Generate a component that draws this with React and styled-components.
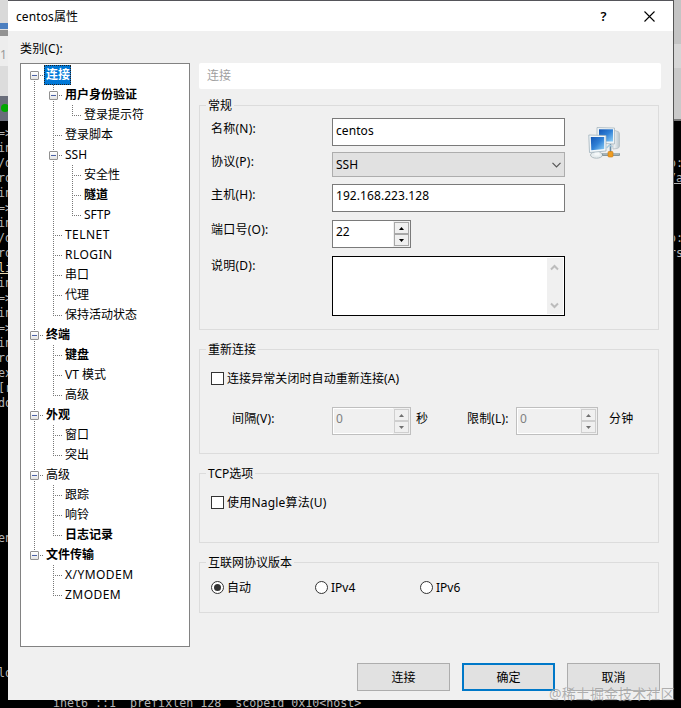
import { Fragment } from 'react';
import styled, { createGlobalStyle, css } from 'styled-components';

const GlobalStyle = createGlobalStyle`
    * {
        box-sizing: border-box;
    }

    body {
        margin: 0;
        background: #000;
        overflow: hidden;
        font-family: 'Noto Sans', 'Noto Sans CJK SC', sans-serif;
        font-size: 12px;
        color: #000;
    }

    button, input, select {
        font: inherit;
        color: inherit;
    }
`

const Desktop = styled.div`
    position: relative;
    display: grid;
    grid-template-columns: 8px 665px 8px;
    grid-template-rows: 700px 8px;
    width: 681px;
    height: 708px;
    background: #000;
    overflow: hidden;
`

const Strip = styled.div`
    display: flex;
    flex-direction: column;
    overflow: hidden;
    border-left: ${props => props.$right ? '1px solid #555' : '0'};
`

const Block = styled.div`
    flex: none;
    height: ${props => props.$h}px;
    background: ${props => props.$bg};
    color: #9a9a9a;
    font-size: 12px;
    line-height: ${props => props.$h + 8}px;
    white-space: nowrap;
    overflow: hidden;
`

const StatusDot = styled.div`
    width: 8px;
    height: 8px;
    margin: 8px 0 0 1px;
    border-radius: 50%;
    background: #00a800;
`

const TermLine = styled.div`
    flex: none;
    height: 15px;
    font-family: 'DejaVu Sans Mono', monospace;
    font-size: 11.65px;
    line-height: 15px;
    white-space: pre;
    color: ${props => props.$color || '#b4b4b4'};
    text-decoration: ${props => props.$underline ? 'underline' : 'none'};
    margin-left: ${props => props.$shift || 0}px;
`

const BottomStrip = styled.div`
    grid-column: 1 / 4;
    height: 8px;
    padding-left: 53px;
    overflow: hidden;

    & > div {
        margin-top: -4px;
    }
`

const Dialog = styled.div`
    display: flex;
    flex-direction: column;
    height: 700px;
    background: #f0f0f0;
    border-top: 1px solid #55555a;
`

const TitleBar = styled.div`
    display: flex;
    align-items: center;
    height: 30px;
    padding-left: 8px;
    background: #fff;
`

const Title = styled.div`
    flex: 1;
    letter-spacing: .1px;
`

const TitleButton = styled.div`
    display: flex;
    align-items: center;
    justify-content: center;
    width: 46px;
    height: 30px;
    padding-right: 1px;
    font-size: 13px;
    font-weight: 600;
`

const Body = styled.div`
    display: flex;
    height: 616px;
    padding-left: 12px;
`

const Side = styled.div`
    width: 170px;
    padding-top: 9px;
`

const Caption = styled.div`
    height: 23px;
    line-height: 17px;
    letter-spacing: .15px;
`

const Tree = styled.div`
    height: 584px;
    padding: 1px 0 0 4px;
    background: #fff;
    border: 1px solid #828282;
`

const TreeRow = styled.div`
    display: flex;
    height: 20px;
`

const dotsY = 'repeating-linear-gradient(to bottom, #777 0 1px, transparent 1px 2px)'
const dotsX = 'repeating-linear-gradient(to right, #777 0 1px, transparent 1px 2px)'

const Guide = styled.div`
    display: flex;
    align-items: center;
    justify-content: center;
    width: 19px;
    height: 20px;
    padding-top: 1px;
    background-repeat: no-repeat;
    background-image: ${dotsY}, ${dotsY}, ${dotsX};
    background-size: 1px ${props => props.$up ? 10 : 0}px, 1px ${props => props.$down ? 10 : 0}px, ${props => props.$branch ? 9 : 0}px 1px;
    background-position: 9px 0, 9px 10px, 9px 10px;
`

const Expander = styled.div`
    display: flex;
    align-items: center;
    justify-content: center;
    width: 9px;
    height: 9px;
    background: linear-gradient(#fff, #e4e4e4);
    border: 1px solid #919191;
    border-radius: 1px;

    &::after {
        content: "";
        width: 5px;
        height: 1px;
        background: #4b63a7;
    }
`

const TreeLabel = styled.div`
    padding: 0 1px 0 2px;
    line-height: 20px;
    height: 20px;
    white-space: nowrap;
    font-weight: ${props => props.$bold ? 700 : 400};
    letter-spacing: ${props => props.$wide ? '.45px' : '0'};

    ${props => props.$selected && css`
        color: #fff;
        background: #0078d7;
        outline: 1px dotted #222;
        outline-offset: -1px;
    `}
`

const Panel = styled.div`
    width: 462px;
    margin: 32px 0 0 9px;
`

const PanelTitle = styled.div`
    height: 26px;
    padding-left: 8px;
    margin-bottom: 9px;
    line-height: 26px;
    color: #a0a0a0;
    background: #fff;
    border-radius: 2px;
`

const Group = styled.fieldset`
    width: 460px;
    height: ${props => props.$h}px;
    margin: 0 0 12px;
    padding: ${props => props.$top}px 0 0 11px;
    border: 1px solid #dcdcdc;
`

const Legend = styled.legend`
    height: 15px;
    margin-left: -5px;
    padding: 0 2px;
    line-height: 16px;
`

const Columns = styled.div`
    display: flex;
`

const Field = styled.div`
    display: flex;
    align-items: flex-start;
    margin-bottom: ${props => props.$gap}px;
`

const FieldLabel = styled.label`
    width: 121px;
    line-height: 18px;
    padding-top: ${props => props.$pad || 1}px;
    letter-spacing: .25px;
`

const TextBox = styled.div`
    width: 233px;
    height: 28px;
    padding-left: 3px;
    line-height: ${props => props.$line || 23}px;
    letter-spacing: .07px;
    background: #fff;
    border: 1px solid #7a7a7a;
`

const Combo = styled.div`
    display: flex;
    align-items: center;
    justify-content: space-between;
    width: 233px;
    height: 25px;
    padding: 0 3px;
    background: #e1e1e1;
    border: 1px solid #adadad;
`

const SpinBox = styled.div`
    display: flex;
    justify-content: space-between;
    width: ${props => props.$w}px;
    height: 28px;
    padding-left: 3px;
    line-height: 22px;
    color: ${props => props.$disabled ? '#808080' : '#000'};
    background: ${props => props.$disabled ? '#f0f0f0' : '#fff'};
    border: 1px solid ${props => props.$disabled ? '#bfbfbf' : '#7a7a7a'};
    box-shadow: ${props => props.$disabled ? 'inset 0 0 0 1px #fff' : 'none'};
`

const SpinButtons = styled.div`
    display: flex;
    flex-direction: column;
    width: 17px;
    padding: 1px;
    background: #f0f0f0;
`

const SpinButton = styled.div`
    display: flex;
    flex: 1;
    align-items: center;
    justify-content: center;
    border: 1px solid ${props => props.$disabled ? '#cfcfcf' : '#a8a8a8'};
`

const Memo = styled.div`
    display: flex;
    justify-content: flex-end;
    width: 233px;
    height: 60px;
    padding: 1px;
    background: #fff;
    border: 1px solid #000;
`

const ScrollTrack = styled.div`
    display: flex;
    flex-direction: column;
    align-items: center;
    justify-content: space-between;
    width: 16px;
    padding: 6px 1px 5px 0;
    background: #f0f0f0;
`

const SessionIcon = styled.svg`
    margin: 8px 0 0 23px;
`

const Check = styled.div`
    display: flex;
    align-items: center;
    gap: 3px;
    height: 18px;
    width: ${props => props.$w ? props.$w + 'px' : 'auto'};
    letter-spacing: ${props => props.$spacing || 0}px;
    white-space: nowrap;
`

const CheckMark = styled.span`
    width: 13px;
    height: 13px;
    background: #fff;
    border: 1px solid #333;
`

const RadioMark = styled.span`
    display: flex;
    align-items: center;
    justify-content: center;
    width: 13px;
    height: 13px;
    background: #fff;
    border: 1px solid #333;
    border-radius: 50%;

    &::after {
        content: "";
        width: 7px;
        height: 7px;
        border-radius: 50%;
        background: ${props => props.$on ? '#333' : 'transparent'};
    }
`

const IntervalRow = styled.div`
    display: flex;
    margin: 20px 0 0 21px;
`

const IntervalText = styled.span`
    width: ${props => props.$w}px;
    padding-left: ${props => props.$pad || 0}px;
    line-height: 23px;
    letter-spacing: .15px;
    white-space: nowrap;
`

const Footer = styled.div`
    display: flex;
    justify-content: flex-end;
    gap: 12px;
    padding: 16px 13px 0 0;
`

const Button = styled.button`
    width: 93px;
    height: 28px;
    padding: 0 0 1px;
    background: #e1e1e1;
    border: ${props => props.$primary ? '2px solid #0078c8' : '1px solid #adadad'};
`

const Watermark = styled.div`
    position: absolute;
    left: 549px;
    top: 684px;
    font-size: 14px;
    line-height: 20px;
    letter-spacing: .1px;
    white-space: nowrap;
    color: rgba(150, 150, 150, .75);
    text-shadow: 0 0 1px rgba(255, 255, 255, .5);
`

const categories = [
    {
        name: '连接', bold: true, selected: true, items: [
            { name: '用户身份验证', bold: true, items: [{ name: '登录提示符' }] },
            { name: '登录脚本' },
            { name: 'SSH', items: [{ name: '安全性' }, { name: '隧道', bold: true }, { name: 'SFTP' }] },
            { name: 'TELNET' },
            { name: 'RLOGIN' },
            { name: '串口' },
            { name: '代理' },
            { name: '保持活动状态' },
        ]
    },
    { name: '终端', bold: true, items: [{ name: '键盘', bold: true }, { name: 'VT 模式' }, { name: '高级' }] },
    { name: '外观', bold: true, items: [{ name: '窗口' }, { name: '突出' }] },
    { name: '高级', items: [{ name: '跟踪' }, { name: '响铃' }, { name: '日志记录', bold: true }] },
    { name: '文件传输', bold: true, items: [{ name: 'X/YMODEM' }, { name: 'ZMODEM' }] },
]

const leftTerminal = [
    '=>', 'in', '/d', 'ro', 'in', '=>', 'in', '/d', 'ro', 'li', 'in', '=>', 'in', '=>', 'in', 'ro', 'ex', '[r', 'do',
    '', '', '', '', '', '', '', '', 'en', '', '', '', '', '', '', '', '', 'lo',
]

const rightTerminal = ['', '', 'o:', '/a', '', '', '', 'o:', 'rs']

function Nodes({ items, parents = [] }) {
    return items.map((item, i) => {
        const last = i === items.length - 1
        const first = i === 0 && parents.length === 0
        return (
            <Fragment key={item.name}>
                <TreeRow>
                    {parents.map((on, n) => <Guide key={n} $up={on} $down={on} />)}
                    <Guide $up={!first} $down={!last} $branch>
                        {item.items && <Expander />}
                    </Guide>
                    <TreeLabel $bold={item.bold} $selected={item.selected} $wide={/^[A-Z/]{6,}$/.test(item.name)}>
                        {item.name}
                    </TreeLabel>
                </TreeRow>
                {item.items && <Nodes items={item.items} parents={[...parents, !last]} />}
            </Fragment>
        )
    })
}

function Spinner({ value, width, disabled }) {
    const fill = disabled ? '#707070' : '#000'
    return (
        <SpinBox $w={width} $disabled={disabled}>
            {value}
            <SpinButtons>
                <SpinButton $disabled={disabled}>
                    <svg width="5" height="3"><path d="M0 3L2.5 0L5 3Z" fill={fill} /></svg>
                </SpinButton>
                <SpinButton $disabled={disabled}>
                    <svg width="5" height="3"><path d="M0 0L2.5 3L5 0Z" fill={fill} /></svg>
                </SpinButton>
            </SpinButtons>
        </SpinBox>
    )
}

function Computers() {
    return (
        <SessionIcon width="34" height="34" viewBox="0 0 34 34">
            <defs>
                <linearGradient id="screen" x1="0" y1="0" x2="1" y2="1">
                    <stop offset="0" stopColor="#1456b4" />
                    <stop offset=".5" stopColor="#2f80d6" />
                    <stop offset="1" stopColor="#8fd0f6" />
                </linearGradient>
                <linearGradient id="tower" x1="0" y1="0" x2="1" y2="0">
                    <stop offset="0" stopColor="#f8fafb" />
                    <stop offset="1" stopColor="#b9c5cb" />
                </linearGradient>
            </defs>
            <path d="M25 4L30 5.500Q31.500 6 31.500 8V20Q31.500 22 29 22.500L25 23Z" fill="url(#tower)" stroke="#b5bfc4" strokeWidth=".8" />
            <path d="M9 1.500L26.500 2V18L9 17Z" fill="#eef4f7" stroke="#a9b7bf" strokeWidth=".8" />
            <path d="M11 3.300H25V15.500H11Z" fill="url(#screen)" />
            <ellipse cx="8.500" cy="29" rx="6" ry="3.200" fill="#e7edef" stroke="#a9b5bb" strokeWidth=".9" />
            <path d="M6.500 25H11.500V29.500H6.500Z" fill="#f5f8f9" />
            <path d="M.8 9L18 9.500V25L1.500 26.500Z" fill="#f4f8fa" stroke="#9fb1bb" strokeWidth=".8" />
            <path d="M2.800 11H16.200V23L3.300 24.300Z" fill="url(#screen)" />
            <path d="M22.500 18V28" stroke="#6d8ea5" strokeWidth="1.600" />
            <path d="M18.500 22L21.500 19L24.500 21" fill="none" stroke="#a8cce0" strokeWidth="1.500" />
            <rect x="14" y="27" width="18" height="3" rx="1" fill="#87989e" />
            <path d="M15 28H31" stroke="#d5dddf" strokeWidth=".8" />
            <rect x="20" y="25.500" width="5" height="5.500" rx="1" fill="#ef9d22" stroke="#cb7b13" strokeWidth=".6" />
        </SessionIcon>
    )
}

export default function App() {
    return (
        <>
            <GlobalStyle />
            <Desktop>
                <Strip>
                    <Block $h={23} $bg="#d9d9d9" />
                    <Block $h={6} $bg="#4c7fc0" />
                    <Block $h={1} $bg="#e0e0e0" />
                    <Block $h={6} $bg="#929292" />
                    <Block $h={30} $bg="#ededed">1</Block>
                    <Block $h={30} $bg="#dcdcdc" />
                    <Block $h={25} $bg="#696d7a"><StatusDot /></Block>
                    <Block $h={5} $bg="#000" />
                    {leftTerminal.map((text, i) => (
                        <TermLine key={i} $shift={-2} $underline={text === 'li'} $color={text === 'li' ? '#e8d8b0' : undefined}>{text}</TermLine>
                    ))}
                </Strip>
                <Dialog>
                    <TitleBar>
                        <Title>centos属性</Title>
                        <TitleButton>?</TitleButton>
                        <TitleButton>
                            <svg width="11" height="11"><path d="M.5.5L10.500 10.500M10.500.5L.5 10.500" stroke="#000" strokeWidth="1.100" /></svg>
                        </TitleButton>
                    </TitleBar>
                    <Body>
                        <Side>
                            <Caption>类别(C):</Caption>
                            <Tree><Nodes items={categories} /></Tree>
                        </Side>
                        <Panel>
                            <PanelTitle>连接</PanelTitle>
                            <Group $h={232} $top={5}>
                                <Legend>常规</Legend>
                                <Columns>
                                    <div>
                                        <Field $gap={6}>
                                            <FieldLabel $pad={2}>名称(N):</FieldLabel>
                                            <TextBox>centos</TextBox>
                                        </Field>
                                        <Field $gap={7}>
                                            <FieldLabel>协议(P):</FieldLabel>
                                            <Combo>
                                                SSH
                                                <svg width="9" height="6"><path d="M.5.8L4.500 4.800L8.500.8" fill="none" stroke="#555" strokeWidth="1.200" /></svg>
                                            </Combo>
                                        </Field>
                                        <Field $gap={8}>
                                            <FieldLabel $pad={2}>主机(H):</FieldLabel>
                                            <TextBox $line={22}>192.168.223.128</TextBox>
                                        </Field>
                                        <Field $gap={8}>
                                            <FieldLabel>端口号(O):</FieldLabel>
                                            <Spinner value="22" width={79} />
                                        </Field>
                                        <Field $gap={0}>
                                            <FieldLabel>说明(D):</FieldLabel>
                                            <Memo>
                                                <ScrollTrack>
                                                    <svg width="9" height="7"><path d="M1 5.500L4.500 2L8 5.500" fill="none" stroke="#bcbcbc" strokeWidth="2" /></svg>
                                                    <svg width="9" height="7"><path d="M1 1.500L4.500 5L8 1.500" fill="none" stroke="#bcbcbc" strokeWidth="2" /></svg>
                                                </ScrollTrack>
                                            </Memo>
                                        </Field>
                                    </div>
                                    <Computers />
                                </Columns>
                            </Group>
                            <Group $h={112} $top={12}>
                                <Legend>重新连接</Legend>
                                <Check $spacing={0.08}><CheckMark />连接异常关闭时自动重新连接(A)</Check>
                                <IntervalRow>
                                    <IntervalText $w={100}>间隔(V):</IntervalText>
                                    <Spinner value="0" width={79} disabled />
                                    <IntervalText $w={56} $pad={5}>秒</IntervalText>
                                    <IntervalText $w={49}>限制(L):</IntervalText>
                                    <Spinner value="0" width={82} disabled />
                                    <IntervalText $w={40} $pad={11}>分钟</IntervalText>
                                </IntervalRow>
                            </Group>
                            <Group $h={77} $top={12}>
                                <Legend>TCP选项</Legend>
                                <Check $spacing={0.2}><CheckMark />使用Nagle算法(U)</Check>
                            </Group>
                            <Group $h={58} $top={8}>
                                <Legend>互联网协议版本</Legend>
                                <Columns>
                                    <Check $w={104}><RadioMark $on />自动</Check>
                                    <Check $w={105}><RadioMark />IPv4</Check>
                                    <Check><RadioMark />IPv6</Check>
                                </Columns>
                            </Group>
                        </Panel>
                    </Body>
                    <Footer>
                        <Button>连接</Button>
                        <Button $primary>确定</Button>
                        <Button>取消</Button>
                    </Footer>
                </Dialog>
                <Strip $right>
                    <Block $h={44} $bg="#c4c4c4" />
                    <Block $h={24} $bg="#d6d6d6" />
                    <Block $h={51} $bg="#c9c9c9" />
                    <Block $h={2} $bg="#777" />
                    <Block $h={5} $bg="#000" />
                    {rightTerminal.map((text, i) => (
                        <TermLine key={i} $shift={-5} $underline={text === '/a'}>{text}</TermLine>
                    ))}
                </Strip>
                <BottomStrip>
                    <TermLine>{'inet6 ::1  prefixlen 128  scopeid 0x10<host>'}</TermLine>
                </BottomStrip>
                <Watermark>@稀土掘金技术社区</Watermark>
            </Desktop>
        </>
    )
}
